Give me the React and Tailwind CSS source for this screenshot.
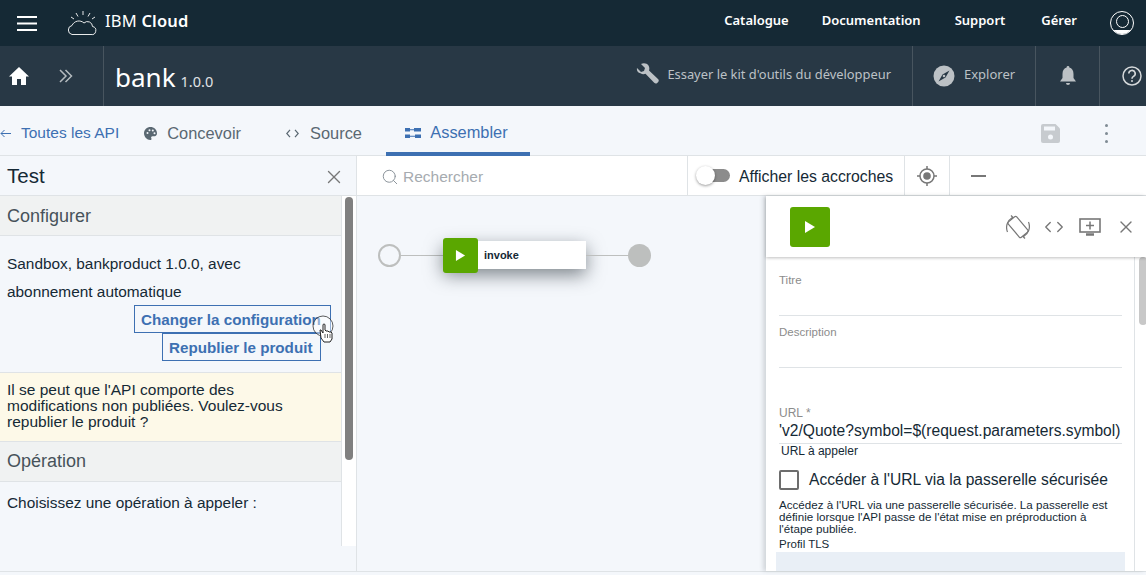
import React from 'react';
import { Search, X, ChevronLeft, ChevronRight } from 'lucide-react';

const sans = "font-['Liberation_Sans',Arial,sans-serif]";
const plex = "font-['Noto_Sans',sans-serif]";

const CloudLogo = () => (
  <svg width="30" height="26" viewBox="0 0 30 26" fill="none" stroke="#fff" strokeWidth="1" className="opacity-90">
    <path d="M5 24.500h19a4 4 0 0 0 1.500-8 5 5 0 0 0-8.500-3.500 7.500 7.500 0 0 0-12 2.500 4.600 4.600 0 0 0 0 9z" />
    <path d="M16 1v4M9 3l2 3.500M23 3l-2 3.500M4 7l3 2M28 7l-3 2" />
  </svg>
);

const Hamburger = () => (
  <svg width="20" height="15" viewBox="0 0 20 15" stroke="#fff" strokeWidth="1.800">
    <path d="M0 1h20M0 7.500h20M0 14h20" />
  </svg>
);

const HomeIcon = () => (
  <svg width="20" height="18" viewBox="0 0 20 18" fill="#fff">
    <path d="M10 0L0 9.500h3V18h5v-6h4v6h5V9.500h3z" />
  </svg>
);

const Chevrons = () => (
  <svg width="14" height="14" viewBox="0 0 14 14" fill="none" stroke="#b5bbbf" strokeWidth="1.500">
    <path d="M1 1l6 6-6 6M6.500 1l6 6-6 6" />
  </svg>
);

const WrenchIcon = () => (
  <svg width="23" height="23" viewBox="0 0 23 23" fill="#bcc1c5">
    <path d="M1 5l4 4 3-1 1-3-4-4c3-1.500 6-.5 7.500 1.500 1 1.500 1 3.500.5 5l9 8.500c1 1 1 2 .2 3l-1 1c-1 .8-2 .8-3-.2l-8.700-9c-1.500.5-3.500.5-5-.5C1.500 9.500.5 7.500 1 5z" />
  </svg>
);

const CompassIcon = () => (
  <svg width="22" height="22" viewBox="0 0 22 22">
    <circle cx="11" cy="11" r="10.500" fill="#bcc1c5" />
    <path d="M16.500 5.500L12.500 12.500 5.500 16.500 9.500 9.500z" fill="#283845" />
    <circle cx="11" cy="11" r="1.300" fill="#bcc1c5" />
  </svg>
);

const BellIcon = () => (
  <svg width="16" height="20" viewBox="0 0 16 20" fill="#bcc1c5">
    <path d="M8 0a1.300 1.300 0 0 1 1.300 1.500C12 2.200 13.500 4.500 13.500 8v4l2.500 3.500H0L2.500 12V8c0-3.500 1.500-5.800 4.200-6.500A1.300 1.300 0 0 1 8 0z" />
    <path d="M6 17h4a2 2 0 0 1-4 0z" />
  </svg>
);

const HelpIcon = () => (
  <svg width="20" height="20" viewBox="0 0 20 20" fill="none" stroke="#d5d8da">
    <circle cx="10" cy="10" r="9" strokeWidth="1.500" />
    <path d="M6.800 7.600a3.200 3.200 0 1 1 4.700 2.800c-1 .6-1.500 1.200-1.500 2.400" strokeWidth="1.600" />
    <circle cx="10" cy="15" r="1" fill="#d5d8da" stroke="none" />
  </svg>
);

const PaletteIcon = () => (
  <svg width="13" height="13" viewBox="0 0 13 13" fill="#5a6872">
    <path d="M6.500 0C3 0 0 2.700 0 6.300 0 10 3 13 6.200 13c1.300 0 1.600-1 1.100-1.800-.6-1 0-2 1.200-2h2.200C12 9.200 13 8 13 6.300 13 2.700 10 0 6.500 0z" />
    <circle cx="3.500" cy="6" r="1" fill="#f4f7fb" />
    <circle cx="5.500" cy="3.200" r="1" fill="#f4f7fb" />
    <circle cx="8.800" cy="3.500" r="1" fill="#f4f7fb" />
    <circle cx="10.500" cy="6.300" r="1" fill="#f4f7fb" />
  </svg>
);

const Play = ({ size }) => (
  <svg width={size} height={size} viewBox="0 0 12 12" fill="#fff">
    <path d="M1 0l10 6-10 6z" />
  </svg>
);

const Assemble = () => (
  <svg width="16" height="10" viewBox="0 0 16 10" fill="#3d70b2">
    <rect x="0" y="0" width="5" height="3.500" />
    <rect x="9" y="0" width="7" height="3.500" />
    <rect x="0" y="6.500" width="5" height="3.500" />
    <rect x="10" y="6.500" width="6" height="3.500" />
    <path d="M5 1.300h4v1H5zM5 7.800h5v1H5z" />
  </svg>
);

const SaveIcon = () => (
  <svg width="19" height="19" viewBox="0 0 19 19" fill="#c7cbcf">
    <path d="M2 0h12.500L19 4.500V17a2 2 0 0 1-2 2H2a2 2 0 0 1-2-2V2a2 2 0 0 1 2-2z" />
    <rect x="3" y="2.500" width="11" height="4" fill="#f4f7fb" />
    <circle cx="9.500" cy="13" r="2.500" fill="#f4f7fb" />
  </svg>
);

const Target = () => (
  <svg width="22" height="22" viewBox="0 0 22 22" fill="none" stroke="#777">
    <circle cx="11" cy="11" r="7" strokeWidth="1.500" />
    <circle cx="11" cy="11" r="3.800" fill="#777" stroke="none" />
    <path d="M11 1v3M11 18v3M1 11h3M18 11h3" strokeWidth="1.500" />
  </svg>
);

const Rotate = () => (
  <svg width="24" height="26" viewBox="0 0 24 26" fill="none" stroke="#777" strokeWidth="1.200">
    <rect x="6.500" y="3" width="11" height="20" rx="1.500" transform="rotate(-40 12 13)" />
    <path d="M1.500 18a11.500 11.500 0 0 1 5-14.500M22.500 8a11.500 11.500 0 0 1-5 14.500" />
    <path d="M5 1.500l2 2-2 1.500M19 24.500l-2-2 2-1.500" />
  </svg>
);

const MonitorAdd = () => (
  <svg width="22" height="20" viewBox="0 0 22 20" fill="none" stroke="#777" className="ml-[10px]">
    <rect x="1" y="2" width="20" height="13" strokeWidth="1.600" />
    <path d="M7 8.500h8M11 4.500v8" strokeWidth="1.500" />
    <path d="M7 17.500h8" strokeWidth="2.500" />
  </svg>
);

const CursorHand = () => (
  <svg width="24" height="30" viewBox="0 0 24 30" className="absolute left-[312px] top-[-3px]">
    <circle cx="11" cy="11" r="10" fill="rgba(255,255,255,0.45)" stroke="#333" strokeWidth="0.800" />
    <path d="M8 15l1 8 3 4h6l2-3v-6l-1-1-2 0-1-1-2 0-1-1v-5a1 1 0 0 0-2 0v8l-2-3z" fill="#fff" stroke="#222" strokeWidth="1" />
    <path d="M13 19v4M15.500 19v4M18 19v4" stroke="#222" strokeWidth="0.700" />
  </svg>
);

const Field = ({ label, className }) => (
  <div className={`border-b border-[#dfe3e6] text-[11.500px] leading-[14px] text-[#8c8c8c] ${className}`}>{label}</div>
);

export default function App() {
  return (
    <div className={`${sans} flex h-[575px] w-[1146px] flex-col overflow-hidden bg-[#f4f7fb] text-[#152935]`}>
      {/* top bar */}
      <header className="flex h-[46px] shrink-0 items-center bg-[#152935] text-white">
        <div className="ml-[17px]"><Hamburger /></div>
        <div className="ml-[30px]"><CloudLogo /></div>
        <div className={`${plex} ml-[8px] pb-[3px] text-[16.500px] tracking-[0.2px]`}>
          IBM <span className="font-semibold">Cloud</span>
        </div>
        <nav className={`${plex} ml-auto flex items-center text-[13px] font-semibold`}>
          <span className="mr-[33px] pb-[4px]">Catalogue</span>
          <span className="mr-[34px] pb-[4px]">Documentation</span>
          <span className="mr-[36px] pb-[4px]">Support</span>
          <span className="mr-[33px] pb-[4px]">Gérer</span>
          <span className="mr-[12px] flex h-[24px] w-[24px] items-end justify-center overflow-hidden rounded-full border border-white">
            <span className="relative flex h-full w-full justify-center">
              <span className="mt-[3px] h-[13px] w-[13px] rounded-full border border-white" />
              <span className="absolute bottom-0 h-[4px] w-full bg-white" />
            </span>
          </span>
        </nav>
      </header>

      {/* api bar */}
      <div className="flex h-[60px] shrink-0 items-stretch bg-[#283845] text-white">
        <div className="flex w-[104px] shrink-0 items-center border-r border-[#48555f]">
          <div className="ml-[9px]"><HomeIcon /></div>
          <div className="ml-[30px]"><Chevrons /></div>
        </div>
        <div className="flex items-baseline pl-[11px] pt-[14px]">
          <span className={`${plex} text-[26px] leading-[34px]`}>bank</span>
          <span className={`${plex} ml-[5px] text-[14.500px] text-[#e0e3e5]`}>1.0.0</span>
        </div>
        <div className="ml-auto flex items-stretch text-[#bcc1c5]">
          <div className="flex w-[292px] items-center justify-end border-r border-[#48555f] pr-[21px]">
            <div className="mr-[8px] mb-[4px]"><WrenchIcon /></div>
            <span className={`${plex} pb-[2px] text-[12.900px]`}>Essayer le kit d'outils du développeur</span>
          </div>
          <div className="flex w-[123px] items-center border-r border-[#48555f] pl-[20px]">
            <div className="mr-[9px]"><CompassIcon /></div>
            <span className={`${plex} pb-[2px] text-[13px]`}>Explorer</span>
          </div>
          <div className="flex w-[64px] items-center justify-center border-r border-[#48555f]">
            <BellIcon />
          </div>
          <div className="flex w-[46px] items-center justify-center pl-[20px] pr-[2px]">
            <HelpIcon />
          </div>
        </div>
      </div>

      {/* tabs */}
      <div className="flex h-[50px] shrink-0 items-stretch border-b border-[#dfe3e6] text-[16.400px]">
        <a className="flex items-center pt-[5px] text-[15.500px] text-[#3d70b2]">
          <svg width="11" height="9" viewBox="0 0 11 9" fill="none" stroke="#3d70b2" className="mr-[10px]">
            <path d="M11 4.500H1M4.500 1L1 4.500 4.500 8" />
          </svg>
          Toutes les API
        </a>
        <a className="ml-[25px] flex items-center pt-[5px] text-[#5a6872]">
          <span className="mr-[10px]"><PaletteIcon /></span>
          Concevoir
        </a>
        <a className="ml-[45px] flex items-center pt-[5px] text-[#5a6872]">
          <svg width="13" height="9" viewBox="0 0 13 9" fill="none" stroke="#5a6872" strokeWidth="1.200" className="mr-[11px]">
            <path d="M4 .8L.8 4.500 4 8.200M9 .8l3.200 3.700L9 8.200" />
          </svg>
          Source
        </a>
        <a className="ml-[24px] mb-[-1px] flex w-[144px] items-center justify-center border-b-[4px] border-[#3d70b2] pt-[7px] pr-[3px] text-[#3d70b2]">
          <span className="mr-[9px] flex"><Assemble /></span>
          Assembler
        </a>
        <div className="ml-auto flex items-center pt-[5px] pr-[38px]">
          <div className="mr-[45px] flex"><SaveIcon /></div>
          <span className="flex flex-col gap-[5px]">
            <span className="h-[3px] w-[3px] rounded-full bg-[#7f8b94] p-[1.500px]" />
            <span className="h-[3px] w-[3px] rounded-full bg-[#7f8b94] p-[1.500px]" />
            <span className="h-[3px] w-[3px] rounded-full bg-[#7f8b94] p-[1.500px]" />
          </span>
        </div>
      </div>

      {/* body */}
      <div className="flex h-[416px] shrink-0 border-b border-[#dfe3e6]">
        {/* test panel */}
        <aside className="flex w-[357px] shrink-0 flex-col border-r border-[#dfe3e6]">
          <div className="flex h-[40px] shrink-0 items-center justify-between border-b border-[#dfe3e6] pl-[7px] pr-[11px] pt-[2px] text-[20.500px]">
            Test
            <X size={22} strokeWidth={1.500} className="text-[#777]" />
          </div>
          <div className="flex h-[350px] shrink-0">
            <div className="w-[342px] shrink-0 overflow-hidden border-r border-[#dfe3e6]">
              <div className="flex h-[40px] items-center border-b border-[#dfe3e6] bg-[#f0f2f2] pl-[7px] pt-[1px] text-[18px] text-[#47525a]">Configurer</div>
              <div className="relative h-[136px] px-[7px] pt-[14px] text-[15.400px] leading-[28px]">
                <p>Sandbox, bankproduct 1.0.0, avec<br />abonnement automatique</p>
                <div className="flex flex-col items-end pr-[3px] text-[15.200px] font-bold leading-[25px] text-[#3d70b2]">
                  <span className="-mt-[1px] flex h-[28px] w-[197px] items-center overflow-hidden whitespace-nowrap border border-[#3d70b2] pl-[6px]">Changer la configuration</span>
                  <span className="flex h-[28px] w-[159px] -translate-x-[10px] items-center whitespace-nowrap border border-[#3d70b2] pl-[6px]">Republier le produit</span>
                </div>
                <div className="absolute left-0 top-[82px]"><CursorHand /></div>
              </div>
              <div className="h-[70px] border-y border-[#dfe3e6] bg-[#fdf9e8] pl-[7px] pt-[9px] text-[15.500px] leading-[16px]">
                Il se peut que l'API comporte des<br />modifications non publiées. Voulez-vous<br />republier le produit ?
              </div>
              <div className="flex h-[40px] items-center border-b border-[#dfe3e6] bg-[#f0f2f2] pl-[7px] text-[18px] text-[#47525a]">Opération</div>
              <div className="pl-[7px] pt-[11px] text-[15.400px] leading-[20px]">Choisissez une opération à appeler :</div>
            </div>
            <div className="flex-1 bg-white pl-[3px] pt-[1px]">
              <div className="h-[263px] w-[8px] rounded-full bg-[#808080]" />
            </div>
          </div>
        </aside>

        {/* assemble area */}
        <main className="flex min-w-0 flex-1 flex-col">
          <div className="flex h-[40px] shrink-0 items-stretch border-b border-[#dfe3e6] bg-white">
            <div className="flex w-[331px] items-center border-r border-[#dfe3e6] pl-[24px] pt-[2px] text-[15.500px] text-[#a6abb0]">
              <Search size={18} strokeWidth={1.300} className="mr-[4px] text-[#8a9299]" />
              Rechercher
            </div>
            <div className="flex w-[217px] items-center border-r border-[#dfe3e6] pl-[9px] text-[15.800px]">
              <span className="relative mr-[9px] h-[13px] w-[33px] rounded-full bg-[#8c8c8c]">
                <span className="absolute left-[-1px] top-[-3px] h-[19px] w-[19px] rounded-full bg-white shadow-[0_1px_3px_rgba(0,0,0,0.4)]" />
              </span>
              <span className="pt-[2px]">Afficher les accroches</span>
            </div>
            <div className="flex w-[45px] items-center justify-center border-r border-[#dfe3e6]"><Target /></div>
            <div className="flex items-center pl-[21px]"><span className="h-[2px] w-[15px] bg-[#777]" /></div>
          </div>

          <div className="flex min-h-0 flex-1">
            {/* canvas */}
            <div className="flex flex-1 items-start pl-[21px] pt-[45px]">
              <div className="flex items-center">
                <span className="h-[23px] w-[23px] rounded-full border-2 border-[#bdbfbe] bg-[#f4f7fb]" />
                <span className="h-[1px] w-[42px] bg-[#bdbfbe]" />
                <div className="flex h-[28px] w-[143px] items-center bg-white shadow-[0_6px_18px_rgba(30,40,50,0.55)]">
                  <span className="flex h-[35px] w-[35px] shrink-0 items-center justify-center rounded-[3px] bg-[#5aa700]"><Play size={11} /></span>
                  <span className="ml-[6px] text-[11px] font-bold">invoke</span>
                </div>
                <span className="h-[1px] w-[42px] bg-[#bdbfbe]" />
                <span className="h-[23px] w-[23px] rounded-full bg-[#bdbfbe]" />
              </div>
            </div>

            {/* action panel */}
            <section className="flex w-[380px] shrink-0 flex-col bg-white shadow-[-3px_0_4px_rgba(60,70,80,0.18)]">
              <div className="z-10 flex h-[61px] shrink-0 items-center bg-white pl-[24px] pr-[10px] shadow-[0_1px_3px_rgba(0,0,0,0.25)]">
                <span className="flex h-[40px] w-[40px] items-center justify-center rounded-[3px] bg-[#5aa700]"><Play size={12} /></span>
                <div className="ml-auto flex items-center text-[#777]">
                  <Rotate />
                  <span className="ml-[9px] flex">
                    <ChevronLeft size={18} strokeWidth={1.800} className="-mr-[4px]" />
                    <ChevronRight size={18} strokeWidth={1.800} className="-ml-[2px]" />
                  </span>
                  <MonitorAdd />
                  <X size={20} strokeWidth={1.600} className="ml-[15px]" />
                </div>
              </div>
              <div className="flex min-h-0 flex-1">
                <div className="w-[369px] shrink-0 overflow-hidden border-r border-[#dfe3e6] pl-[13px] pr-[12px]">
                  <Field label="Titre" className="h-[59px] pt-[16px]" />
                  <Field label="Description" className="h-[52px] pt-[9px]" />
                  <div className="mt-[38px] text-[12px] leading-[14px] text-[#8c8c8c]">URL *</div>
                  <div className="h-[24px] overflow-hidden whitespace-nowrap border-b border-[#dfe3e6] text-[15.600px] leading-[21px]">'v2/Quote?symbol=$(request.parameters.symbol)</div>
                  <div className="pl-[2px] text-[12px] leading-[14px]">URL à appeler</div>
                  <label className="mt-[10px] flex items-center text-[15.600px]">
                    <span className="mr-[10px] h-[20px] w-[20px] rounded-[2px] border-2 border-[#6d6d6d]" />
                    Accéder à l'URL via la passerelle sécurisée
                  </label>
                  <p className="mt-[8px] whitespace-nowrap text-[11.600px] leading-[12px]">
                    Accédez à l'URL via une passerelle sécurisée. La passerelle est<br />définie lorsque l'API passe de l'état mise en préproduction à<br />l'étape publiée.
                  </p>
                  <div className="mt-[1px] text-[11.500px] leading-[16px]">Profil TLS</div>
                  <div className="-ml-[3px] h-[30px] w-[349px] bg-[#e9eff6]" />
                </div>
                <div className="flex-1 pl-[4px]">
                  <div className="h-[68px] w-[8px] rounded-full bg-[#c8c8c8]" />
                </div>
              </div>
            </section>
          </div>
        </main>
      </div>
    </div>
  );
}
